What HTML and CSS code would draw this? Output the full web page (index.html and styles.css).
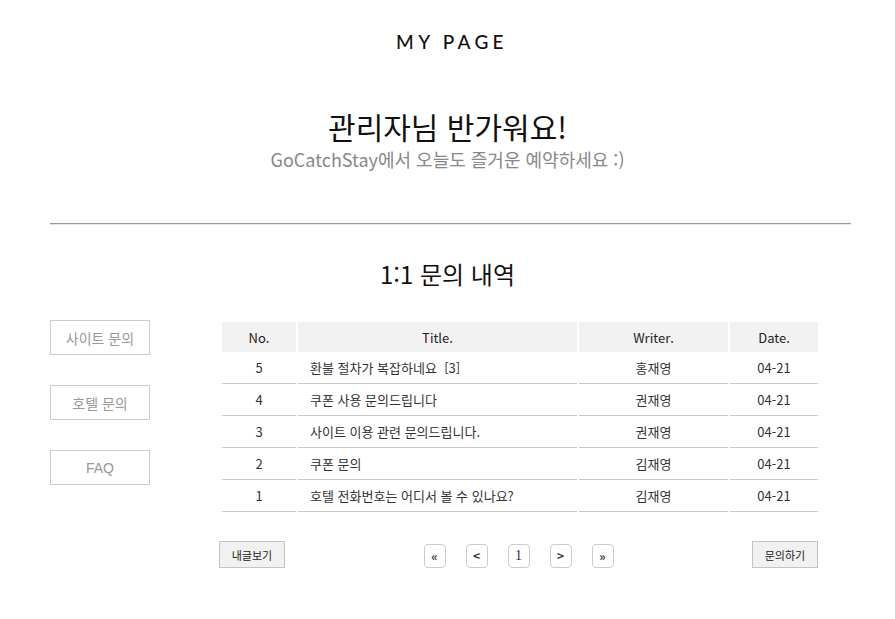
FILE: index.html
```html
<!DOCTYPE html>
<html lang="ko">
<head>
<meta charset="utf-8">
<title>MY PAGE</title>
<link rel="stylesheet" href="styles.css">
</head>
<body>
<header class="logo">MY PAGE</header>
<section class="welcome">
  <h1 class="welcome-title">관리자님 반가워요!</h1>
  <p class="welcome-sub">GoCatchStay에서 오늘도 즐거운 예약하세요 :)</p>
</section>
<hr class="divider">
<h2 class="section-title">1:1 문의 내역</h2>
<div class="content">
  <nav class="side">
    <a class="side-btn">사이트 문의</a>
    <a class="side-btn">호텔 문의</a>
    <a class="side-btn">FAQ</a>
  </nav>
  <div class="board">
    <table class="list">
      <thead>
        <tr><th class="c-no">No.</th><th class="c-title">Title.</th><th class="c-writer">Writer.</th><th class="c-date">Date.</th></tr>
      </thead>
      <tbody>
        <tr><td>5</td><td class="t">환불 절차가 복잡하네요&nbsp; [3]</td><td>홍재영</td><td>04-21</td></tr>
        <tr><td>4</td><td class="t">쿠폰 사용 문의드립니다</td><td>권재영</td><td>04-21</td></tr>
        <tr><td>3</td><td class="t">사이트 이용 관련 문의드립니다.</td><td>권재영</td><td>04-21</td></tr>
        <tr><td>2</td><td class="t">쿠폰 문의</td><td>김재영</td><td>04-21</td></tr>
        <tr><td>1</td><td class="t">호텔 전화번호는 어디서 볼 수 있나요?</td><td>김재영</td><td>04-21</td></tr>
      </tbody>
    </table>
    <div class="bottom">
      <button class="btn">내글보기</button>
      <div class="pager">
        <span class="pg">«</span>
        <span class="pg">&lt;</span>
        <span class="pg num">1</span>
        <span class="pg">&gt;</span>
        <span class="pg">»</span>
      </div>
      <button class="btn">문의하기</button>
    </div>
  </div>
</div>
</body>
</html>
```

FILE: styles.css
```css
body {
  margin: 0;
  font-family: "Noto Sans CJK KR", "Noto Sans", sans-serif;
  color: #222;
  background: #fff;
}
.logo {
  margin-top: 30px;
  padding-left: 9px;
  text-align: center;
  font-family: "Lato", "Noto Sans", sans-serif;
  font-size: 19px;
  line-height: 24px;
  letter-spacing: 4.3px;
  font-weight: 500;
  color: #111;
}
.welcome {
  margin-top: 52px;
  text-align: center;
}
.welcome-title {
  margin: 0;
  font-size: 30px;
  line-height: 40px;
  font-weight: 400;
  color: #111;
}
.welcome-sub {
  margin: 1px 0 0;
  font-size: 18px;
  line-height: 24px;
  color: #888;
}
.divider {
  margin: 52px 44px 0 50px;
  border: 0;
  border-top: 1px solid #999;
  border-bottom: 1px solid #e6e6e6;
  height: 0;
}
.section-title {
  margin: 34px 0 0;
  text-align: center;
  font-size: 24px;
  line-height: 30px;
  font-weight: 400;
  color: #111;
}
.content {
  display: flex;
  gap: 70px;
  margin-top: 31px;
  padding-left: 50px;
}
.side {
  display: flex;
  flex-direction: column;
  gap: 30px;
  width: 100px;
}
.side-btn {
  display: flex;
  align-items: center;
  justify-content: center;
  height: 33px;
  border: 1px solid #ccc;
  font-family: "Liberation Sans", "Noto Sans CJK KR", sans-serif;
  font-size: 14px;
  color: #999;
}
.board {
  width: 600px;
  margin-top: 2px;
}
.list {
  width: 600px;
  border-collapse: separate;
  border-spacing: 2px 0;
  font-size: 13px;
  table-layout: fixed;
}
.list th {
  height: 30px;
  padding: 0;
  background: #f2f2f2;
  font-weight: 400;
  color: #222;
}
.c-no { width: 74px; }
.c-title { width: 279px; }
.c-writer { width: 149px; }
.c-date { width: 88px; }
.list td {
  height: 31px;
  padding: 0;
  text-align: center;
  border-bottom: 1px solid #c8c8c8;
  color: #333;
}
.list td.t {
  text-align: left;
  padding-left: 12px;
}
.bottom {
  display: flex;
  align-items: center;
  justify-content: space-between;
  margin-top: 29px;
}
.btn {
  width: 66px;
  height: 27px;
  padding: 0;
  background: #f1f1f1;
  border: 1px solid #c4c4c4;
  font-family: "Noto Sans CJK KR", sans-serif;
  font-size: 11px;
  color: #222;
}
.btn:first-child { margin-left: -1px; }
.btn:last-child { margin-right: 2px; }
.pager {
  display: flex;
  gap: 20px;
  margin-top: 2px;
}
.pg {
  box-sizing: border-box;
  display: flex;
  align-items: center;
  justify-content: center;
  width: 22px;
  height: 24px;
  border: 1px solid #ccc;
  border-radius: 4px;
  font-size: 12px;
  font-weight: 700;
  color: #333;
}
.pg.num {
  font-family: "Liberation Serif", serif;
  font-size: 14px;
  font-weight: 400;
  color: #234;
}
```
